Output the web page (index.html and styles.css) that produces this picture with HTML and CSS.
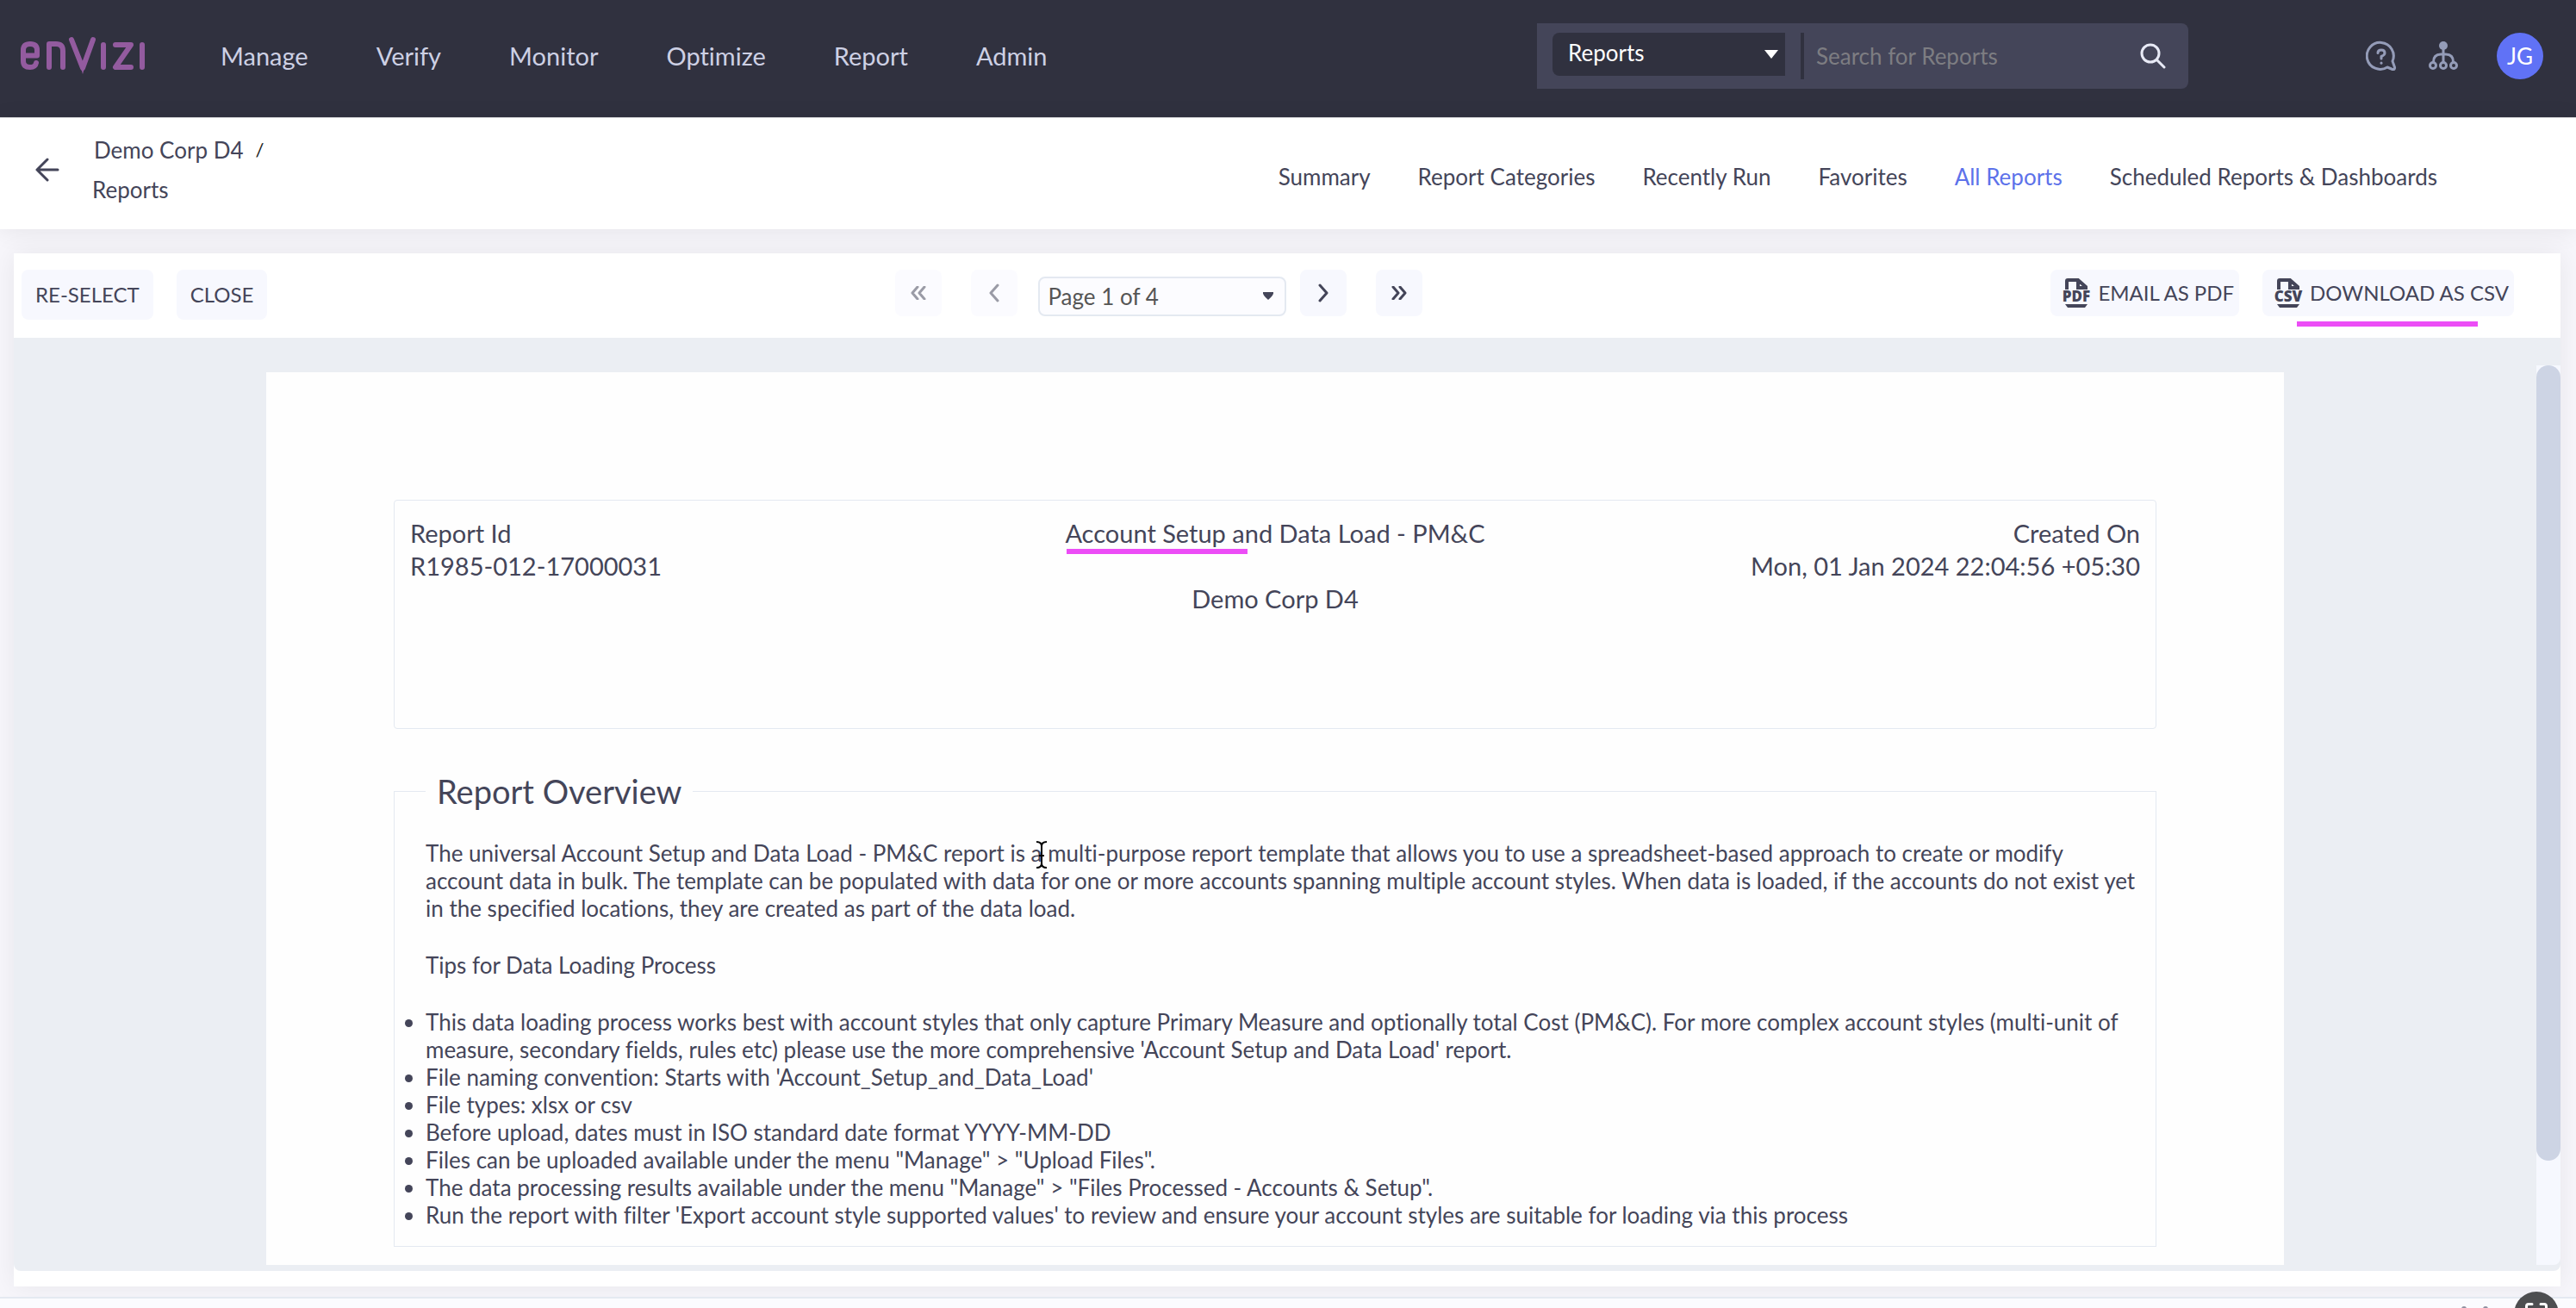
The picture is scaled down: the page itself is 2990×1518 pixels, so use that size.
FILE: index.html
```html
<!DOCTYPE html>
<html lang="en">
<head>
<meta charset="utf-8">
<title>Envizi - Reports</title>
<link rel="stylesheet" href="styles.css">
</head>
<body>
<header class="topbar">
  <a class="logo" href="#" aria-label="Envizi">
    <svg width="146" height="46" viewBox="0 0 146 46" fill="none" stroke="#935b9f" stroke-width="6" stroke-linecap="round" stroke-linejoin="round">
      <path d="M4 22.500H20V16Q20 9 12 9Q4 9 4 16V29Q4 36 12 36Q18 36 19 31"/>
      <path d="M34 36V9H42Q50 9 50 17V36"/>
      <path d="M60 4L73 37L85 4"/>
      <path d="M69 30L73 44L77 30Z" fill="#935b9f" stroke="none"/>
      <path d="M97 10V36M111 10H129L111 36H129M142 10V36"/>
    </svg>
  </a>
  <nav class="mainnav" aria-label="Main">
    <a href="#">Manage</a><a href="#">Verify</a><a href="#">Monitor</a><a href="#">Optimize</a><a href="#">Report</a><a href="#">Admin</a>
  </nav>
  <form class="search">
    <div class="picker picker-dark">
      <select aria-label="Search in"><option>Reports</option></select>
      <svg class="caret" width="16" height="10" viewBox="0 0 16 10"><path d="M0 0H16L8 10Z" fill="#fff"/></svg>
    </div>
    <input class="search-input" type="text" aria-label="Search" placeholder="Search for Reports">
    <button class="icon-btn" type="button" aria-label="Search">
      <svg width="30" height="30" viewBox="0 0 30 30" fill="none" stroke="#e8eaf6" stroke-width="3" stroke-linecap="round"><circle cx="12" cy="12" r="10"/><path d="M19.500 19.500L28 28"/></svg>
    </button>
  </form>
  <div class="tools">
    <button class="icon-btn" type="button" aria-label="Help">
      <svg width="36" height="36" viewBox="0 0 36 36" fill="none" stroke="#949cb8" stroke-width="3" stroke-linecap="round" stroke-linejoin="round">
        <path d="M31 24A15.500 15.500 0 1 0 25 31L31 33.500Q34 34 33.500 31Z"/>
        <path d="M14 14.500Q14 11 18 11Q22 11 22 14.500Q22 17 18 18.500V21"/><path d="M18 26V26.200"/>
      </svg>
    </button>
    <button class="icon-btn" type="button" aria-label="Organization">
      <svg width="34" height="34" viewBox="0 0 34 34" fill="none" stroke="#949cb8" stroke-width="3">
        <circle cx="17" cy="5" r="5" fill="#949cb8" stroke="none"/>
        <path d="M17 6V24M5.500 24Q5.500 15 14 15H20Q28.500 15 28.500 24"/>
        <circle cx="5" cy="28" r="3.500"/><circle cx="17" cy="28" r="3.500"/><circle cx="29" cy="28" r="3.500"/>
      </svg>
    </button>
    <button class="avatar" type="button">JG</button>
  </div>
</header>

<div class="subbar">
  <a class="back" href="#" aria-label="Back">
    <svg width="28" height="28" viewBox="0 0 28 28" fill="none" stroke="#444559" stroke-width="3" stroke-linecap="round" stroke-linejoin="round"><path d="M14 2L2 14L14 26M2 14H26"/></svg>
  </a>
  <nav class="crumbs" aria-label="Breadcrumb">
    <div class="crumb-parent"><a href="#">Demo Corp D4</a><span class="slash">/</span></div>
    <a href="#">Reports</a>
  </nav>
  <nav class="tabs" aria-label="Reports">
    <a href="#">Summary</a><a href="#">Report Categories</a><a href="#">Recently Run</a><a href="#">Favorites</a><a class="active" href="#">All Reports</a><a href="#">Scheduled Reports &amp; Dashboards</a>
  </nav>
</div>

<main class="panel">
  <div class="toolbar">
    <div class="actions">
      <button class="btn" type="button">RE-SELECT</button>
      <button class="btn" type="button">CLOSE</button>
    </div>
    <div class="pager">
      <div class="pair">
        <button class="page-btn" type="button" disabled aria-label="First page"><svg width="18" height="16" viewBox="0 0 18 16"><path d="M8 1L2 8L8 15M16 1L10 8L16 15"/></svg></button>
        <button class="page-btn" type="button" disabled aria-label="Previous page"><svg width="14" height="22" viewBox="0 0 14 22"><path d="M11 2L3 11L11 20"/></svg></button>
      </div>
      <div class="picker picker-light">
        <select aria-label="Page"><option>Page 1 of 4</option></select>
        <svg class="caret" width="14" height="9" viewBox="0 0 14 9"><path d="M1 0H13Q14 3 7 9Q0 3 1 0Z" fill="#444559"/></svg>
      </div>
      <div class="pair">
        <button class="page-btn" type="button" aria-label="Next page"><svg width="14" height="22" viewBox="0 0 14 22"><path d="M3 2L11 11L3 20"/></svg></button>
        <button class="page-btn" type="button" aria-label="Last page"><svg width="18" height="16" viewBox="0 0 18 16"><path d="M2 1L8 8L2 15M10 1L16 8L10 15"/></svg></button>
      </div>
    </div>
    <div class="exports">
      <button class="export" type="button">
        <svg width="34" height="36" viewBox="0 0 34 36" fill="none" stroke="#444559" stroke-width="4"><path d="M6 14V4Q6 3 7 3H19L28 11V14M19 2V12H28"/><path d="M4 31H30L27 35H7Z" fill="#444559" stroke="none"/><text class="filetype" x="17" y="28" text-anchor="middle">PDF</text></svg>
        EMAIL AS PDF
      </button>
      <button class="export marked" type="button">
        <svg width="34" height="36" viewBox="0 0 34 36" fill="none" stroke="#444559" stroke-width="4"><path d="M6 14V4Q6 3 7 3H19L28 11V14M19 2V12H28"/><path d="M4 31H30L27 35H7Z" fill="#444559" stroke="none"/><text class="filetype" x="17" y="28" text-anchor="middle">CSV</text></svg>
        DOWNLOAD AS CSV
      </button>
    </div>
  </div>

  <div class="viewer">
    <article class="page">
      <section class="summary">
        <div>Report Id<br>R1985-012-17000031</div>
        <div class="summary-title"><span class="title-mark">Account Setup and Data Load - PM&amp;C</span><br><br>Demo Corp D4</div>
        <div class="summary-date">Created On<br>Mon, 01 Jan 2024 22:04:56 +05:30</div>
      </section>
      <fieldset class="overview">
        <legend>Report Overview</legend>
        <p>The universal Account Setup and Data Load - PM&amp;C report is a multi-purpose report template that allows you to use a spreadsheet-based approach to create or modify account data in bulk. The template can be populated with data for one or more accounts spanning multiple account styles. When data is loaded, if the accounts do not exist yet in the specified locations, they are created as part of the data load.</p>
        <p>Tips for Data Loading Process</p>
        <ul>
          <li>This data loading process works best with account styles that only capture Primary Measure and optionally total Cost (PM&amp;C). For more complex account styles (multi-unit of measure, secondary fields, rules etc) please use the more comprehensive 'Account Setup and Data Load' report.</li>
          <li>File naming convention: Starts with 'Account_Setup_and_Data_Load'</li>
          <li>File types: xlsx or csv</li>
          <li>Before upload, dates must in ISO standard date format YYYY-MM-DD</li>
          <li>Files can be uploaded available under the menu "Manage" &gt; "Upload Files".</li>
          <li>The data processing results available under the menu "Manage" &gt; "Files Processed - Accounts &amp; Setup".</li>
          <li>Run the report with filter 'Export account style supported values' to review and ensure your account styles are suitable for loading via this process</li>
        </ul>
        <svg class="ibeam" width="14" height="32" viewBox="0 0 14 32" fill="none" stroke="#000" stroke-width="2"><path d="M1 1Q7 1 7 6Q7 1 13 1M7 5V27M1 31Q7 31 7 26Q7 31 13 31M4 17H10"/></svg>
      </fieldset>
    </article>
    <div class="scroll-track"><div class="scroll-thumb"></div></div>
  </div>
</main>

<footer class="footer">
  <span class="dot"></span><span class="dot"></span>
</footer>
<button class="fab" type="button" aria-label="Full screen">
  <svg width="26" height="26" viewBox="0 0 26 26" fill="none" stroke="#fff" stroke-width="3" stroke-linecap="round" stroke-linejoin="round"><path d="M1.500 8V4Q1.500 1.500 4 1.500H8M18 1.500H22Q24.500 1.500 24.500 4V8M1.500 18V24.500H8M18 24.500H24.500V18"/></svg>
</button>
</body>
</html>
```
FILE: styles.css
```css
* { box-sizing: border-box; }

body {
  margin: 0;
  height: 100vh;
  display: flex;
  flex-direction: column;
  overflow: hidden;
  background: #f7f6fb;
  color: #444559;
  font: 26px/32px Lato, "Noto Sans", sans-serif;
  font-variant-ligatures: none;
}

a { color: inherit; text-decoration: none; }
button, input, select { font: inherit; color: inherit; border: 0; padding: 0; margin: 0; }
button { cursor: pointer; }
svg { display: block; flex: none; }

/* Top bar */
.topbar {
  flex: none;
  height: 137px;
  display: flex;
  align-items: center;
  padding: 0 38px 6px 23px;
  background: #30313f;
  border-bottom: 1px solid #d9d9dd;
}
.mainnav {
  display: flex;
  gap: 79px;
  margin-left: 87px;
  color: #cdd0e4;
  font-size: 29px;
}
.search {
  display: flex;
  align-items: center;
  width: 756px;
  height: 76px;
  margin-left: auto;
  padding: 0 26px 0 18px;
  background: #444559;
  border-radius: 0 8px 8px 0;
}
.picker { position: relative; }
.picker select {
  width: 100%;
  height: 100%;
  appearance: none;
  background: none;
}
.caret {
  position: absolute;
  right: 8px;
  top: 20px;
  pointer-events: none;
}
.picker-dark {
  width: 270px;
  height: 50px;
  margin-bottom: 4px;
  background: #30313f;
  border-radius: 8px 0 0 8px;
  color: #fff;
}
.picker-dark select { padding: 0 18px 4px; }
.search-input {
  flex: 1;
  min-width: 0;
  height: 54px;
  margin-left: 18px;
  padding-left: 14px;
  background: none;
  border-left: 4px solid #30313f;
}
.search-input::placeholder { color: #7d7d82; opacity: 1; }
.icon-btn { background: none; }
.tools {
  display: flex;
  align-items: center;
  gap: 37px;
  margin-left: 206px;
}
.avatar {
  width: 54px;
  height: 54px;
  margin-left: 8px;
  border-radius: 50%;
  background: #6072f6;
  color: #fff;
}

/* Breadcrumb and tabs */
.subbar {
  flex: none;
  height: 129px;
  display: flex;
  align-items: center;
  padding: 0 161px 0 41px;
  background: #fff;
  box-shadow: 0 2px 26px rgba(0, 0, 0, .08);
}
.back { margin-bottom: 10px; }
.crumbs {
  display: flex;
  flex-direction: column;
  gap: 14px;
  margin-left: 38px;
  margin-bottom: 10px;
}
.crumb-parent {
  display: flex;
  gap: 14px;
  padding-left: 2px;
}
.slash { font-size: 22px; color: #222; }
.tabs {
  display: flex;
  gap: 55px;
  margin-left: auto;
  padding-top: 6px;
}
.tabs .active { color: #5d72ea; }

/* Report panel */
.panel {
  flex: 1;
  min-height: 0;
  display: flex;
  flex-direction: column;
  margin: 28px 18px 0 16px;
  padding-bottom: 18px;
  background: #fff;
  box-shadow: 0 0 30px rgba(0, 0, 0, .07);
}
.toolbar {
  flex: none;
  display: flex;
  align-items: flex-start;
  justify-content: space-between;
  height: 98px;
  padding: 19px 54px 0 9px;
  font-size: 24px;
}
.actions { display: flex; gap: 27px; }
.btn {
  height: 58px;
  padding: 0 16px;
  border-radius: 8px;
  background: #f7f8fe;
}
.pager { display: flex; align-items: flex-end; }
.pair { display: flex; gap: 34px; }
.page-btn {
  display: grid;
  place-items: center;
  width: 54px;
  height: 54px;
  border-radius: 8px;
  background: #f7f8fe;
}
.page-btn:disabled { background: #fbfbff; }
.page-btn path {
  fill: none;
  stroke: #444559;
  stroke-width: 3;
  stroke-linecap: round;
  stroke-linejoin: round;
}
.page-btn:disabled path { stroke: #9a9ba6; }
.picker-light {
  width: 288px;
  height: 46px;
  margin: 0 16px 0 24px;
  border: 2px solid #e4e9f1;
  border-radius: 8px;
  background: #fcfcff;
  color: #555;
  font-size: 26px;
}
.picker-light select { padding: 0 9px; }
.picker-light .caret { right: 12px; top: 16px; }
.exports { display: flex; gap: 27px; }
.export {
  display: flex;
  align-items: center;
  gap: 8px;
  height: 54px;
  padding: 0 6px 0 13px;
  border-radius: 8px;
  background: #f7f8fe;
}
.filetype {
  font: 800 17px "Open Sans", sans-serif;
  fill: #444559;
  stroke: none;
}
.marked { position: relative; }
.marked::after,
.title-mark::after {
  content: "";
  position: absolute;
  left: 40px;
  top: 60px;
  width: 210px;
  height: 6px;
  background: #ec4df6;
}

/* Report viewer */
.viewer {
  flex: 1;
  min-height: 0;
  display: flex;
  padding: 32px 0 7px 293px;
  background: #ebeef3;
  border-radius: 0 0 8px 8px;
}
.page {
  flex: 1;
  margin-top: 8px;
  padding: 148px 148px 0;
  overflow: hidden;
  background: #fefefe;
}
.scroll-track {
  width: 28px;
  margin-left: 293px;
  background: #f6f8fe;
  border-radius: 0 0 8px 0;
}
.scroll-thumb {
  height: 88.4%;
  background: #cdd4e4;
  border-radius: 14px;
}
.summary {
  display: grid;
  grid-template-columns: 1fr auto 1fr;
  min-height: 266px;
  padding: 19px 18px;
  border: 1px solid #e4e9f1;
  border-radius: 4px;
  font-size: 29px;
  line-height: 38px;
}
.summary-title { text-align: center; }
.summary-date { text-align: right; }
.title-mark { position: relative; }
.title-mark::after { left: 2px; top: 36px; }
.overview {
  position: relative;
  min-width: 0;
  margin: 48px 0 0;
  padding: 32px 12px 20px 36px;
  border: 1px solid #e4e9f1;
}
.overview legend {
  padding: 0 13px;
  font-size: 38px;
  line-height: 48px;
}
.overview p { margin: 0 0 34px; }
.overview ul { margin: 0; padding: 0; }
.ibeam {
  position: absolute;
  left: 744px;
  top: 34px;
}

/* Footer strip */
.footer {
  flex: none;
  display: flex;
  justify-content: flex-end;
  gap: 19px;
  height: 13px;
  margin-top: 12px;
  padding: 9px 102px 0 0;
  overflow: hidden;
  background: #fbfbfe;
  border-top: 2px solid #e4e9f1;
}
.dot {
  width: 6px;
  height: 6px;
  border-radius: 50%;
  background: #8f90a0;
}
.fab {
  position: fixed;
  right: 20px;
  bottom: -33px;
  display: grid;
  place-items: center;
  width: 52px;
  height: 52px;
  border-radius: 50%;
  background: #4d4e50;
}
```
